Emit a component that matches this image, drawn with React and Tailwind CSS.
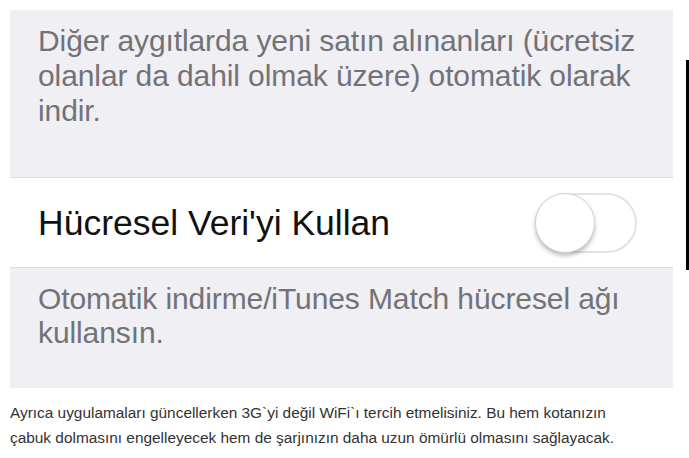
export default function App() {
  return (
    <div className="w-[689px] h-[458px] bg-white overflow-hidden" style={{ fontFamily: '"Liberation Sans", Arial, sans-serif' }}>
      <div className="flex items-start pt-[10px] pl-[10px]">
        <div className="w-[663px] flex flex-col bg-[#efeff4]">
          <div className="h-[167px] pl-[28px] pr-[20px] pt-[13px] text-[30px] leading-[35px] text-[#727277] tracking-[-0.1px]">
            Diğer aygıtlarda yeni satın alınanları (ücretsiz
            <br />
            olanlar da dahil olmak üzere) otomatik olarak
            <br />
            indir.
          </div>
          <div className="h-[1px] bg-[#d9d9de]" />
          <div className="h-[89px] bg-white flex items-center justify-between pl-[28px] pr-[36px]">
            <span className="text-[35.5px] text-[#111] pt-[2px]">Hücresel Veri'yi Kullan</span>
            <div className="relative w-[102px] h-[60px] rounded-full border-[2px] border-[#e3e3e3] bg-white">
              <div className="absolute left-[-2px] top-[-2px] w-[60px] h-[60px] rounded-full bg-white border border-[#d4d4d4] shadow-[0_3px_4px_rgba(0,0,0,0.25)]" />
            </div>
          </div>
          <div className="h-[1px] bg-[#dcdce1]" />
          <div className="h-[120px] pl-[28px] pr-[20px] pt-[14px] text-[30px] leading-[34px] text-[#727277] tracking-[-0.1px]">
            Otomatik indirme/iTunes Match hücresel ağı
            <br />
            kullansın.
          </div>
        </div>
        <div className="ml-[13px] mt-[50px] w-[3px] h-[210px] bg-black" />
      </div>
      <div className="pl-[10px] pt-[12px] text-[15.4px] leading-[25px] text-[#333]">
        Ayrıca uygulamaları güncellerken 3G`yi değil WiFi`ı tercih etmelisiniz. Bu hem kotanızın
        <br />
        çabuk dolmasını engelleyecek hem de şarjınızın daha uzun ömürlü olmasını sağlayacak.
      </div>
    </div>
  );
}
